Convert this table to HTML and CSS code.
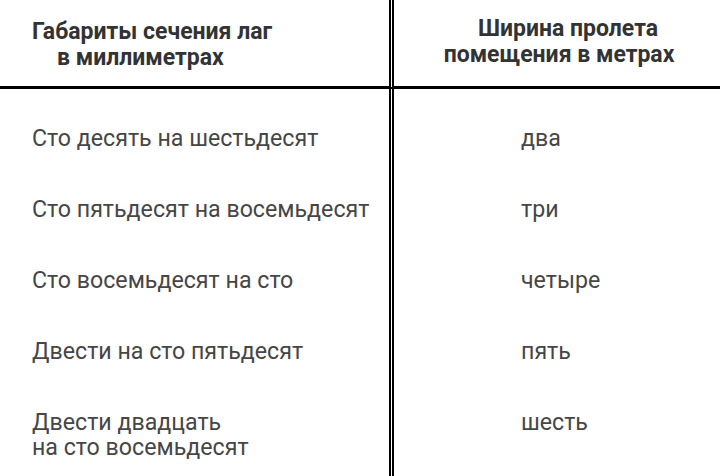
FILE: index.html
```html
<!DOCTYPE html>
<html lang="ru">
<head>
<meta charset="utf-8">
<link rel="stylesheet" href="styles.css">
</head>
<body>
<div class="table">
  <div class="cell head head-left">
    <span class="hl">Габариты сечения лаг</span>
    <span class="hl indent">в миллиметрах</span>
  </div>
  <div class="cell head head-right">
    <span class="hl shift">Ширина пролета</span>
    <span class="hl">помещения в метрах</span>
  </div>

  <div class="cell left first">Сто десять на шестьдесят</div>
  <div class="cell right first">два</div>

  <div class="cell left">Сто пятьдесят на восемьдесят</div>
  <div class="cell right">три</div>

  <div class="cell left">Сто восемьдесят на сто</div>
  <div class="cell right">четыре</div>

  <div class="cell left">Двести на сто пятьдесят</div>
  <div class="cell right">пять</div>

  <div class="cell left last"><span class="line">Двести двадцать</span><span class="line">на сто восемьдесят</span></div>
  <div class="cell right last">шесть</div>
</div>
</body>
</html>
```
FILE: styles.css
```css
html, body {
  margin: 0;
  padding: 0;
  background: #ffffff;
}
body {
  width: 720px;
  height: 476px;
  overflow: hidden;
  font-family: Roboto, "Liberation Sans", sans-serif;
  color: #464646;
}
.table {
  display: grid;
  grid-template-columns: 394px 1fr;
  grid-template-rows: 89px auto auto auto auto 1fr;
  height: 476px;
}
.cell {
  font-size: 23.2px;
  line-height: 24px;
  padding: 23.5px 0;
}
.left {
  border-right: 5px double #000;
  padding-left: 32px;
}
.right {
  padding-left: 127px;
}
.first {
  padding-top: 37px;
}
.last {
  padding-bottom: 0;
}
.line {
  display: block;
  line-height: 25px;
}
.left.last {
  padding-top: 23px;
}
.head {
  height: 89px;
  box-sizing: border-box;
  border-bottom: 3px solid #000;
  font-weight: 700;
  font-size: 23px;
  line-height: 26px;
  color: #333333;
  display: flex;
  flex-direction: column;
}
.head-left {
  border-right: 5px double #000;
  padding: 19px 0 0 32px;
  align-items: flex-start;
}
.head-right {
  padding: 16px 0 0 4px;
  align-items: center;
}
.indent {
  margin-left: 25px;
}
.shift {
  margin-left: 18px;
}
```
